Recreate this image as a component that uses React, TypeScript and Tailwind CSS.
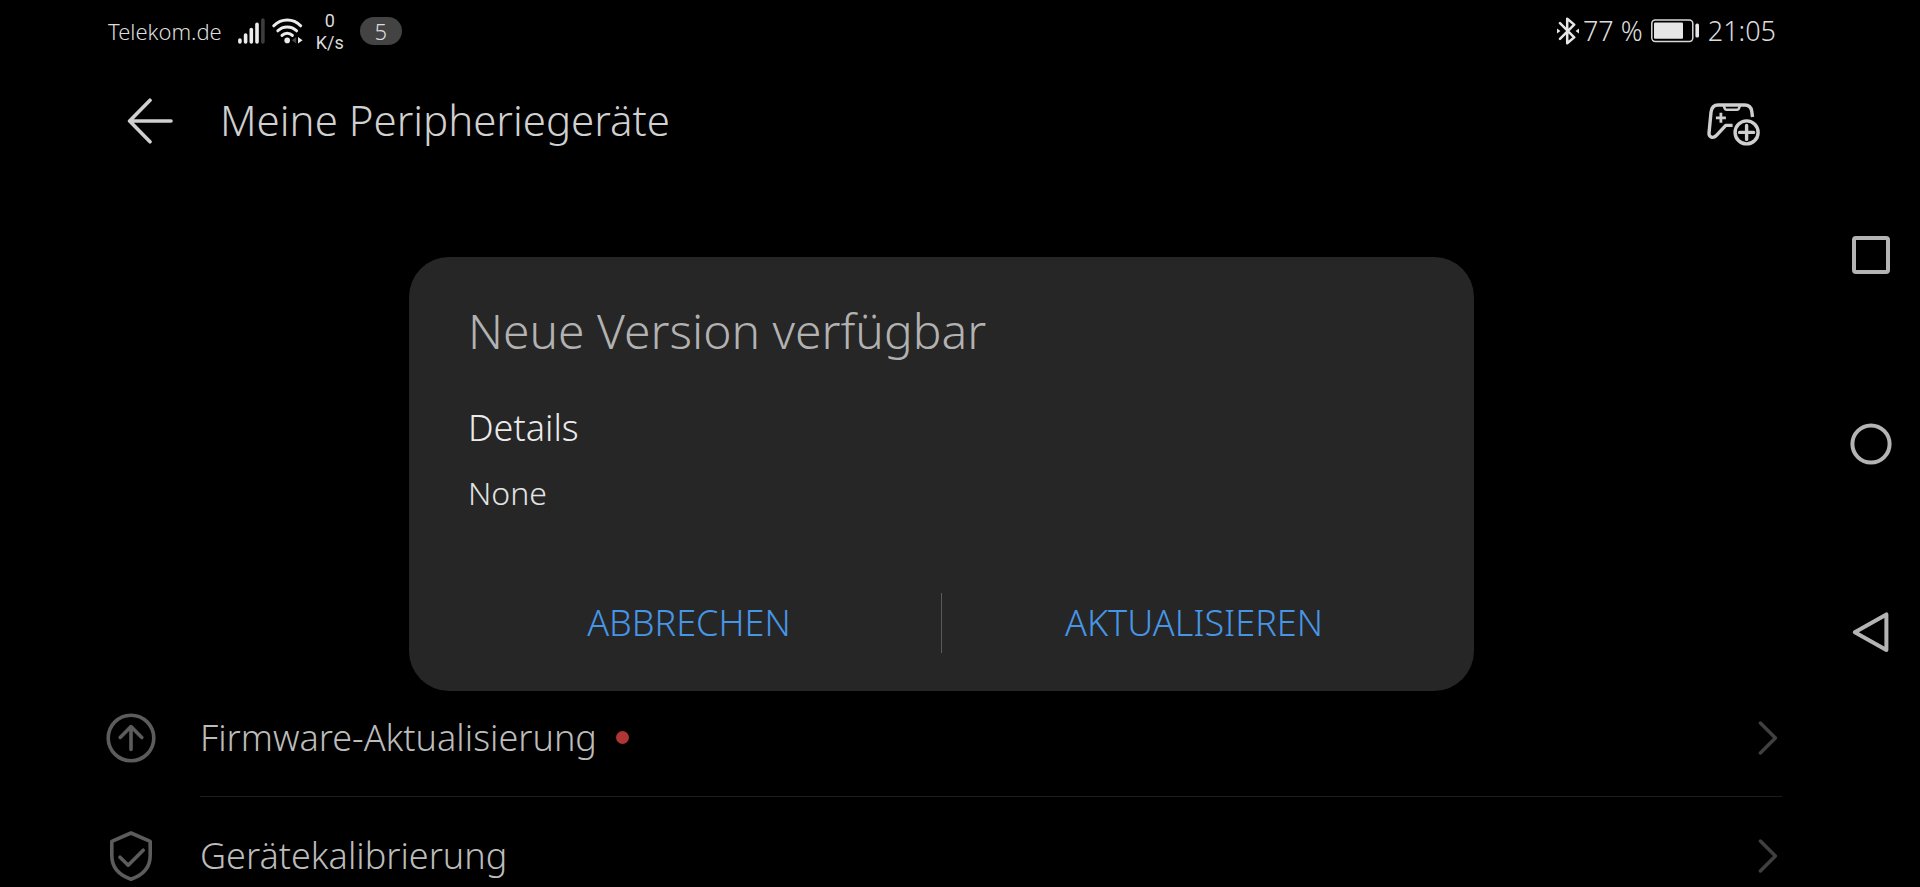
import type { ReactNode } from "react";

function SignalIcon() {
  return (
    <svg className="h-[26px] w-[27px]" viewBox="0 0 27 26" strokeLinecap="round" strokeWidth="3.6" stroke="#ececec" aria-hidden="true">
      <path d="M1.9 22v2" />
      <path d="M7.6 17v7" />
      <path d="M13.3 11.6v12.4" />
      <path d="M19 6.2v17.8" />
      <path d="M24.9 2v22" stroke="#3c3c3c" />
    </svg>
  );
}

function WifiIcon() {
  return (
    <svg className="h-[26px] w-[31px]" viewBox="0 0 31 26" fill="none" stroke="#ececec" strokeWidth="3" strokeLinecap="round" aria-hidden="true">
      <path d="M1.8 7.8C9.4 0.2 21.2 0.2 28.6 7.8" />
      <path d="M5.8 12.8c5.2-5.2 13.6-5.2 18.8 0" />
      <path d="M10 17.4c2.9-2.9 7.5-2.9 10.4 0" />
      <circle cx="15.2" cy="22.4" r="2.8" fill="#ececec" stroke="none" />
      <path d="M24.2 19v6.4l-4.4-3.2z" fill="#444" stroke="none" />
      <path d="M26 19v6.6l4.6-3.3z" fill="#ececec" stroke="none" />
    </svg>
  );
}

function BluetoothIcon() {
  return (
    <svg className="h-[28px] w-[22px]" viewBox="0 0 22 28" fill="none" stroke="#e6e6e6" strokeWidth="2.5" strokeLinecap="round" strokeLinejoin="round" aria-hidden="true">
      <path d="M3 6.2l14.2 14.2-7 5.9V1.7l7 5.9L3 21.8" />
      <path d="M0 11.6l3.4 2.4L0 16.400zM22 11.600L18.600 14l3.400 2.400z" fill="#e6e6e6" stroke="none" />
    </svg>
  );
}

function BatteryIcon() {
  return (
    <svg className="h-[24px] w-[49px]" viewBox="0 0 49 24" fill="none" aria-hidden="true">
      <rect x="0.8" y="1" width="41" height="21.4" rx="3.4" stroke="#d8d8d8" strokeWidth="1.5" />
      <rect x="3" y="3.4" width="29" height="16.4" rx="1" fill="#e6e6e6" />
      <rect x="44.4" y="4.6" width="3.6" height="14" rx="1.6" fill="#e6e6e6" />
    </svg>
  );
}

function BackIcon() {
  return (
    <svg className="h-[46px] w-[46px]" viewBox="0 0 46 46" fill="none" stroke="#d0d0d0" strokeWidth="3.6" strokeLinecap="round" strokeLinejoin="round" aria-hidden="true">
      <path d="M23 2.2L2.6 23l20.4 20.8M2.6 23h41.4" />
    </svg>
  );
}

function AddGamepadIcon() {
  return (
    <svg className="h-[43px] w-[54px]" viewBox="0 0 54 43" fill="none" stroke="#cfcfcf" strokeWidth="3.4" strokeLinejoin="round" aria-hidden="true">
      <path d="M25.6 22.4h-6.8L9 32.8c-2.8 2.8-7.2 1.6-7-2.6L4 9.4C4.5 4.4 6.8 2 11.2 2h26.4c4.4 0 6.6 2.2 7.2 6.4l0.7 5.6" />
      <path d="M16.600 2.400l1.200 3.200c0.300 0.900 0.800 1.200 1.700 1.200h10.600c0.900 0 1.400-0.300 1.700-1.200l1.200-3.200" strokeWidth="2.600" />
      <path d="M13.900 9.800v10M8.900 14.800h10" strokeWidth="2.800" />
      <circle cx="39.600" cy="29.400" r="11.500" />
      <path d="M39.600 22.400v14M32.600 29.400h14" strokeLinecap="round" />
    </svg>
  );
}

function UpdateIcon() {
  return (
    <svg className="h-[50px] w-[50px]" viewBox="0 0 50 50" fill="none" stroke="#5c5c5c" strokeWidth="3.6" strokeLinecap="round" strokeLinejoin="round" aria-hidden="true">
      <circle cx="25" cy="25" r="22.800" />
      <path d="M25 36.400V13.600M14.200 24.400L25 13.600l10.800 10.800" />
    </svg>
  );
}

function ShieldIcon() {
  return (
    <svg className="h-[50px] w-[50px]" viewBox="0 0 50 50" fill="none" stroke="#5c5c5c" strokeWidth="3.6" strokeLinecap="round" strokeLinejoin="round" aria-hidden="true">
      <path d="M25 2l19.200 8.400v14.200C44.200 35.400 37.600 44 25 48.200 12.400 44 5.800 35.400 5.800 24.600V10.400z" />
      <path d="M14 26.200l8.200 8L37.200 19.200" />
    </svg>
  );
}

function ChevronIcon() {
  return (
    <svg className="h-[34px] w-[20px]" viewBox="0 0 20 34" fill="none" stroke="#404040" strokeWidth="3.4" strokeLinecap="round" strokeLinejoin="round" aria-hidden="true">
      <path d="M2.400 2L17.400 17 2.400 32" />
    </svg>
  );
}

function NavButton({ label, children }: { label: string; children: ReactNode }) {
  return (
    <button type="button" aria-label={label} className="size-11">
      <svg className="size-full" viewBox="0 0 44 44" fill="none" stroke="#b4b4b4" strokeWidth="4" strokeLinejoin="round" aria-hidden="true">
        {children}
      </svg>
    </button>
  );
}

function SettingsRow({ icon, label, badge, divider }: { icon: ReactNode; label: string; badge?: boolean; divider?: boolean }) {
  return (
    <li>
      <button type="button" className="flex w-full items-center gap-[44px] pl-[106px] text-left">
        {icon}
        <span className={`mr-[40px] flex h-[118px] flex-1 items-center border-b pr-1 ${divider ? "border-[#1c1c1c]" : "border-transparent"}`}>
          <span className="text-4xl text-[#bcbcbc]">{label}</span>
          {badge && <span className="ml-[19px] size-[13px] rounded-full bg-[#b03535]" />}
          <span className="ml-auto">
            <ChevronIcon />
          </span>
        </span>
      </button>
    </li>
  );
}

function StatusBar() {
  return (
    <div className="flex h-[62px] items-center pr-[46px] pl-[108px] text-[#dcdcdc]">
      <span className="text-[22px]">Telekom.de</span>
      <span className="ml-4 flex items-center gap-[7px]">
        <SignalIcon />
        <WifiIcon />
      </span>
      <span className="ml-[13px] flex flex-col items-center pt-px font-[Roboto,sans-serif] text-lg leading-[22px] font-normal text-[#dcdcdc]">
        <span>0</span>
        <span>K/s</span>
      </span>
      <span className="ml-4 flex h-7 w-[42px] items-center justify-center rounded-full bg-[#434343] text-[22px]">5</span>
      <span className="ml-auto flex items-center text-[27px]">
        <BluetoothIcon />
        <span className="ml-1">77 %</span>
        <span className="mr-2 ml-2">
          <BatteryIcon />
        </span>
        <span>21:05</span>
      </span>
    </div>
  );
}

function UpdateDialog() {
  return (
    <section
      role="dialog"
      aria-modal="true"
      aria-labelledby="dialog-title"
      className="w-[1065px] max-w-full rounded-[40px] bg-[#262626] pt-[38px] pb-[38px]"
    >
      <div className="px-[59px]">
        <h2 id="dialog-title" className="text-5xl leading-[72px] text-[#b2b2b2]">
          Neue Version verfügbar
        </h2>
        <h3 className="mt-[35px] text-4xl leading-[52px] text-[#ebebeb]">Details</h3>
        <p className="mt-[17px] text-[32px] leading-[44px] text-[#e2e2e2]">None</p>
      </div>
      <div className="mt-[78px] flex h-[60px] px-7 text-4xl text-[#4796e6]">
        <button type="button" className="flex-1">
          ABBRECHEN
        </button>
        <span className="w-px bg-[#5a5a5a]" />
        <button type="button" className="flex-1">
          AKTUALISIEREN
        </button>
      </div>
    </section>
  );
}

export default function App() {
  return (
    <div className="flex h-screen overflow-hidden bg-black font-['Noto_Sans',sans-serif] font-light">
      <div className="relative min-w-0 flex-1">
        <StatusBar />
        <header className="flex h-[114px] items-center pr-[61px] pl-[127px]">
          <button type="button" aria-label="Zurück" className="mt-1">
            <BackIcon />
          </button>
          <h1 className="ml-[47px] text-[42px] text-[#d0d0d0]">Meine Peripheriegeräte</h1>
          <button type="button" aria-label="Gerät hinzufügen" className="mt-[10px] ml-auto">
            <AddGamepadIcon />
          </button>
        </header>
        <ul className="mt-[503px]">
          <SettingsRow icon={<UpdateIcon />} label="Firmware-Aktualisierung" badge divider />
          <SettingsRow icon={<ShieldIcon />} label="Gerätekalibrierung" />
        </ul>
        <div className="absolute inset-0 flex items-start justify-center pt-[257px] pr-[43px] pl-[104px]">
          <UpdateDialog />
        </div>
      </div>
      <nav className="flex w-[98px] shrink-0 flex-col items-center justify-center gap-[145px]">
        <NavButton label="Letzte Apps">
          <rect x="5" y="5" width="34" height="34" rx="2" />
        </NavButton>
        <NavButton label="Startbildschirm">
          <circle cx="22" cy="22" r="18.600" />
        </NavButton>
        <NavButton label="Zurück">
          <path d="M37.400 3.400v35.600L5.800 21.200z" />
        </NavButton>
      </nav>
    </div>
  );
}
